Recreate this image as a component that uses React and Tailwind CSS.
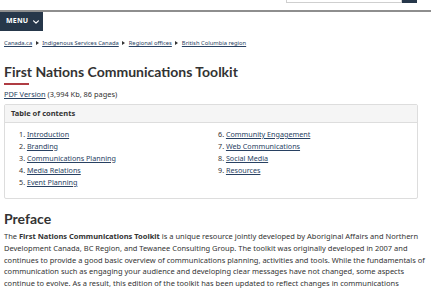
import React from "react";

const Chevron = () => (
  <svg width="6" height="4" viewBox="0 0 10 6" className="ml-[5px]">
    <path d="M1 1l4 4 4-4" stroke="#fff" strokeWidth="2" fill="none" strokeLinecap="round" strokeLinejoin="round" />
  </svg>
);

const Sep = () => (
  <svg width="3" height="4" viewBox="0 0 3 4" className="mx-[3.5px]">
    <path d="M0 0L3 2L0 4Z" fill="#333" />
  </svg>
);

const toc1 = ["Introduction", "Branding", "Communications Planning", "Media Relations", "Event Planning"];
const toc2 = ["Community Engagement", "Web Communications", "Social Media", "Resources"];

export default function App() {
  return (
    <div className="w-[431px] h-[288px] overflow-hidden bg-white text-[#333] font-['Noto_Sans',sans-serif]">
      {/* top strip with search */}
      <div className="h-[10px] flex justify-end items-start pr-[14px]">
        <div className="w-[116px] h-[3px] border border-t-0 border-[#cfcfcf] bg-white" />
        <div className="w-[15px] h-[3px] bg-[#26374a]" />
      </div>
      <div className="h-[2px] bg-[#8e8e8e]" />
      {/* menu */}
      <div className="flex">
        <div className="h-[19px] w-[43px] bg-[#26374a] text-white flex items-center pl-[6px] text-[7px] font-bold tracking-[0.2px]">
          MENU
          <Chevron />
        </div>
      </div>
      {/* breadcrumb */}
      <div className="mt-[7px] pl-[4px] text-[5.8px] leading-[10px] flex items-center whitespace-nowrap">
        <a className="text-[#284162] underline">Canada.ca</a>
        <Sep />
        <a className="text-[#284162] underline">Indigenous Services Canada</a>
        <Sep />
        <a className="text-[#284162] underline">Regional offices</a>
        <Sep />
        <a className="text-[#284162] underline">British Columbia region</a>
      </div>
      {/* title */}
      <div className="px-[4px]">
        <h1 className="mt-[15px] font-['Lato',sans-serif] font-bold text-[14px] leading-[18px] text-[#333] whitespace-nowrap">
          First Nations Communications Toolkit
        </h1>
        <div className="mt-[2px] w-[25px] h-[2px] bg-[#af3c43]" />
        <div className="mt-[5px] text-[7.4px] leading-[9px] whitespace-nowrap">
          <a className="text-[#284162] underline">PDF Version</a> (3,994 Kb, 86 pages)
        </div>
        {/* TOC panel */}
        <div className="mt-[5px] w-[414px] border border-[#ddd] rounded-[2px]">
          <div className="h-[18px] bg-[#f5f5f5] border-b border-[#ddd] flex items-center pl-[6px] text-[7.5px] font-bold text-[#333]">
            Table of contents
          </div>
          <div className="flex pt-[5px] pb-[10px] text-[7.2px] leading-[12px]">
            <ol className="w-[213px] pl-[14px]">
              {toc1.map((t, i) => (
                <li key={t} className="whitespace-nowrap">
                  {i + 1}. <a className="text-[#284162] underline">{t}</a>
                </li>
              ))}
            </ol>
            <ol>
              {toc2.map((t, i) => (
                <li key={t} className="whitespace-nowrap">
                  {i + 6}. <a className="text-[#284162] underline">{t}</a>
                </li>
              ))}
            </ol>
          </div>
        </div>
        {/* Preface */}
        <h2 className="mt-[12px] font-['Lato',sans-serif] font-bold text-[14px] leading-[16px] text-[#333]">
          Preface
        </h2>
        <p className="mt-[4px] text-[7.5px] leading-[11.75px] whitespace-nowrap">
          The <b>First Nations Communications Toolkit</b> is a unique resource jointly developed by Aboriginal Affairs and Northern
          <br />
          Development Canada, BC Region, and Tewanee Consulting Group. The toolkit was originally developed in 2007 and
          <br />
          continues to provide a good basic overview of communications planning, activities and tools. While the fundamentals of
          <br />
          communication such as engaging your audience and developing clear messages have not changed, some aspects
          <br />
          continue to evolve. As a result, this edition of the toolkit has been updated to reflect changes in communications
        </p>
      </div>
    </div>
  );
}
